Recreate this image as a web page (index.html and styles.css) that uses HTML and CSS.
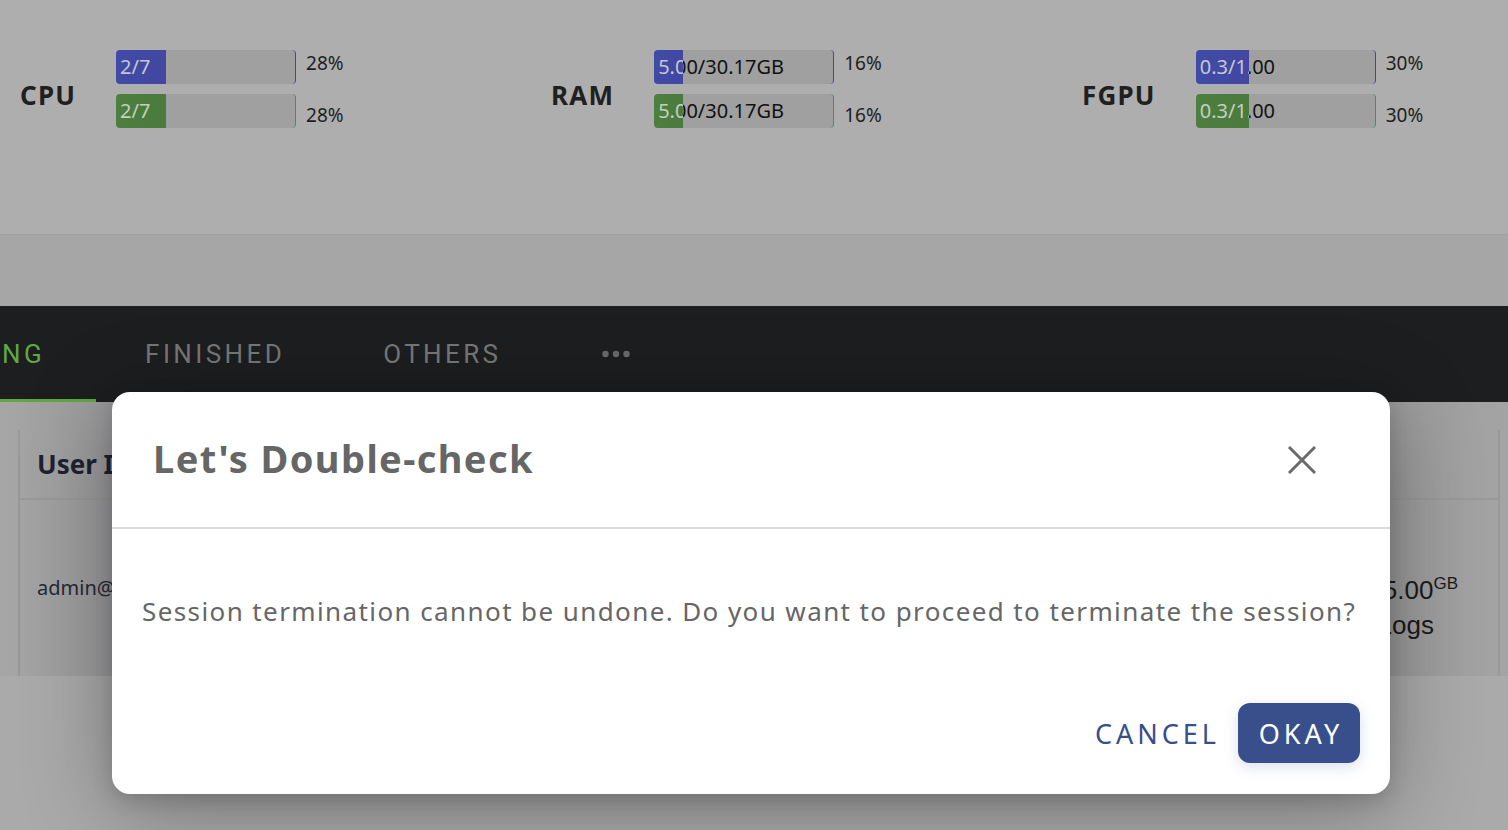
FILE: index.html
```html
<!DOCTYPE html>
<html lang="en">
<head>
<meta charset="utf-8">
<title>Sessions</title>
<link rel="stylesheet" href="styles.css">
</head>
<body>
<div class="page">
  <section class="stats">
    <div class="stat">
      <div class="stat-label">CPU</div>
      <div class="bars">
        <div class="bar-row first">
          <div class="bar blue"><span class="bar-text">2/7</span><div class="fill" style="width:28%"><span class="bar-text">2/7</span></div></div>
          <span class="pct">28%</span>
        </div>
        <div class="bar-row second">
          <div class="bar green"><span class="bar-text">2/7</span><div class="fill" style="width:28%"><span class="bar-text">2/7</span></div></div>
          <span class="pct">28%</span>
        </div>
      </div>
    </div>
    <div class="stat">
      <div class="stat-label">RAM</div>
      <div class="bars">
        <div class="bar-row first">
          <div class="bar blue"><span class="bar-text">5.00/30.17GB</span><div class="fill" style="width:16%"><span class="bar-text">5.00/30.17GB</span></div></div>
          <span class="pct">16%</span>
        </div>
        <div class="bar-row second">
          <div class="bar green"><span class="bar-text">5.00/30.17GB</span><div class="fill" style="width:16%"><span class="bar-text">5.00/30.17GB</span></div></div>
          <span class="pct">16%</span>
        </div>
      </div>
    </div>
    <div class="stat">
      <div class="stat-label">FGPU</div>
      <div class="bars">
        <div class="bar-row first">
          <div class="bar blue"><span class="bar-text">0.3/1.00</span><div class="fill" style="width:30%"><span class="bar-text">0.3/1.00</span></div></div>
          <span class="pct">30%</span>
        </div>
        <div class="bar-row second">
          <div class="bar green"><span class="bar-text">0.3/1.00</span><div class="fill" style="width:30%"><span class="bar-text">0.3/1.00</span></div></div>
          <span class="pct">30%</span>
        </div>
      </div>
    </div>
  </section>

  <div class="gap-zone"></div>

  <nav class="tabs">
    <div class="tab active"><span>RUNNING</span></div>
    <div class="tab"><span>FINISHED</span></div>
    <div class="tab"><span>OTHERS</span></div>
    <div class="tab dots">
      <svg width="28" height="8" viewBox="0 0 28 8" aria-label="more"><circle cx="3.5" cy="4" r="3.2" fill="#6a6a6a"/><circle cx="14" cy="4" r="3.2" fill="#6a6a6a"/><circle cx="24.5" cy="4" r="3.2" fill="#6a6a6a"/></svg>
    </div>
  </nav>

  <section class="table">
    <div class="table-inner">
      <div class="thead">
        <div class="th">User ID</div>
      </div>
      <div class="trow">
        <div class="td-left">admin@lablup.com</div>
        <div class="td-right">
          <div class="mem">5.00<sup>GB</sup></div>
          <div class="logs">Logs</div>
        </div>
      </div>
    </div>
  </section>
</div>

<div class="dialog-layer">
  <div class="dialog">
    <header class="dialog-head">
      <h2 class="dialog-title">Let's Double-check</h2>
      <button class="close" aria-label="Close">
        <svg width="32" height="32" viewBox="0 0 32 32"><path d="M3 3 L29 29 M29 3 L3 29" stroke="#6b6b6b" stroke-width="3" fill="none"/></svg>
      </button>
    </header>
    <div class="dialog-body">
      <p>Session termination cannot be undone. Do you want to proceed to terminate the session?</p>
    </div>
    <footer class="dialog-foot">
      <button class="btn-text">CANCEL</button>
      <button class="btn-primary">OKAY</button>
    </footer>
  </div>
</div>
</body>
</html>
```

FILE: styles.css
```css
* { box-sizing: border-box; }
html, body { margin: 0; padding: 0; }
body {
  width: 1508px;
  height: 830px;
  overflow: hidden;
  background: #aaaaaa;
  font-family: "Noto Sans", "Open Sans", sans-serif;
  position: relative;
}
.page { display: flex; flex-direction: column; }

/* stats panel */
.stats {
  height: 235px;
  background: #aeaeae;
  border-bottom: 1px solid #9e9e9e;
  box-shadow: 0 2px 3px rgba(0,0,0,0.06);
  display: flex;
  padding: 50px 0 0 20px;
  overflow: hidden;
}
.stat {
  width: 531px;
  flex-shrink: 0;
  display: flex;
  align-items: flex-start;
}
.stat-label {
  font-weight: 700;
  font-size: 26px;
  letter-spacing: 1.2px;
  color: #202020;
  margin-top: 28px;
  margin-right: 40px;
  line-height: 34px;
}
.bars { display: flex; flex-direction: column; gap: 10px; }
.bar-row { display: flex; gap: 10px; height: 34px; }
.bar-row.first { align-items: flex-start; }
.bar-row.second { align-items: flex-end; }
.bar {
  position: relative;
  width: 180px;
  height: 34px;
  background: #a0a0a0;
  border-radius: 4px;
  overflow: hidden;
  border-right: 1px solid #4a3f9e;
}
.bar.green { border-right-color: #4e8a6a; }
.bar-text {
  position: absolute;
  left: 4px;
  top: 0;
  line-height: 34px;
  font-size: 20px;
  color: #111;
  white-space: nowrap;
}
.fill {
  position: absolute;
  left: 0; top: 0; bottom: 0;
  overflow: hidden;
}
.blue .fill { background: linear-gradient(90deg, #3f4ba6, #4347a0); }
.green .fill { background: linear-gradient(90deg, #4d7f3f, #4a7a3c); }
.fill .bar-text { color: #c4c6d2; }
.green .fill .bar-text { color: #c4cfc0; }
.pct {
  font-size: 19px;
  color: #1e1e1e;
  line-height: 24px;
}
.bar-row.first .pct { margin-top: 1px; }
.bar-row.second .pct { margin-bottom: 1px; }

.gap-zone { height: 71px; background: #a6a6a6; }

/* tabs */
.tabs {
  height: 96px;
  background: #1d1e20;
  display: flex;
  align-items: stretch;
  overflow: hidden;
}
.tab {
  display: flex;
  align-items: center;
  padding: 0 49px;
  font-family: Roboto, "Noto Sans", sans-serif;
  font-weight: 400;
  font-size: 26px;
  letter-spacing: 3.4px;
  color: #777777;
  border-bottom: 3px solid transparent;
  padding-top: 3px;
  flex-shrink: 0;
}
.tab.active {
  color: #5fa942;
  border-bottom-color: #5fa83f;
  margin-left: -141px;
  padding-right: 51px;
}
.tab.dots { padding-left: 52px; }

/* table */
.table {
  height: 274px;
  background: linear-gradient(90deg, #a6a6a6 0%, #9a9a9c 8%, #9a9a9a 90%, #a4a4a4 100%);
  padding: 28px 8px 0 18px;
}
.table-inner {
  height: 100%;
  border-left: 2px solid #999;
  border-right: 2px solid #999;
  display: flex;
  flex-direction: column;
}
.thead {
  height: 70px;
  border-bottom: 2px solid #999;
  display: flex;
  align-items: center;
  padding-left: 17px;
}
.th { font-size: 26px; font-weight: 700; color: #1e2230; }
.trow {
  flex: 1;
  display: flex;
  justify-content: space-between;
  padding: 74px 40px 0 17px;
}
.td-left { font-size: 20px; color: #262a36; }
.td-right { text-align: right; font-family: "Liberation Sans", Arial, sans-serif; color: #1a1a1a; }
.mem { font-size: 26px; }
.mem sup { font-size: 17px; }
.logs { font-size: 26px; margin-top: 4px; margin-right: 24px; }

/* dialog */
.dialog-layer {
  position: absolute;
  inset: 0;
  padding: 392px 0 0 112px;
}
.dialog {
  width: 1278px;
  height: 402px;
  background: #fff;
  border-radius: 18px;
  box-shadow: 0 16px 90px rgba(0,0,0,0.32), 0 6px 20px rgba(0,0,0,0.15);
  display: flex;
  flex-direction: column;
}
.dialog-head {
  height: 137px;
  border-bottom: 2px solid #dcdcdc;
  display: flex;
  align-items: center;
  justify-content: space-between;
  padding: 0 72px 0 41px;
}
.dialog-title {
  margin: 0;
  font-size: 38px;
  font-weight: 700;
  color: #666666;
  letter-spacing: 1.4px;
  padding-bottom: 4px;
}
.close {
  border: 0;
  background: none;
  padding: 0;
  width: 32px;
  height: 32px;
  display: flex;
}
.dialog-body {
  padding: 64px 30px 0 30px;
  height: 174px;
}
.dialog-body p {
  margin: 0;
  font-size: 26px;
  color: #666666;
  letter-spacing: 1.4px;
  white-space: nowrap;
}
.dialog-foot {
  display: flex;
  justify-content: flex-end;
  align-items: center;
  gap: 18px;
  padding: 0 30px 0 0;
}
.btn-text, .btn-primary {
  font-family: "Noto Sans", sans-serif;
  font-size: 27px;
  letter-spacing: 4px;
  border: 0;
  cursor: pointer;
}
.btn-text {
  background: none;
  color: #384f8c;
  padding: 0;
}
.btn-primary {
  background: #384f8c;
  color: #fff;
  height: 60px;
  width: 122px;
  border-radius: 12px;
  padding: 0 0 0 4px;
  box-shadow: 0 4px 14px rgba(56,79,140,0.18);
}
```
